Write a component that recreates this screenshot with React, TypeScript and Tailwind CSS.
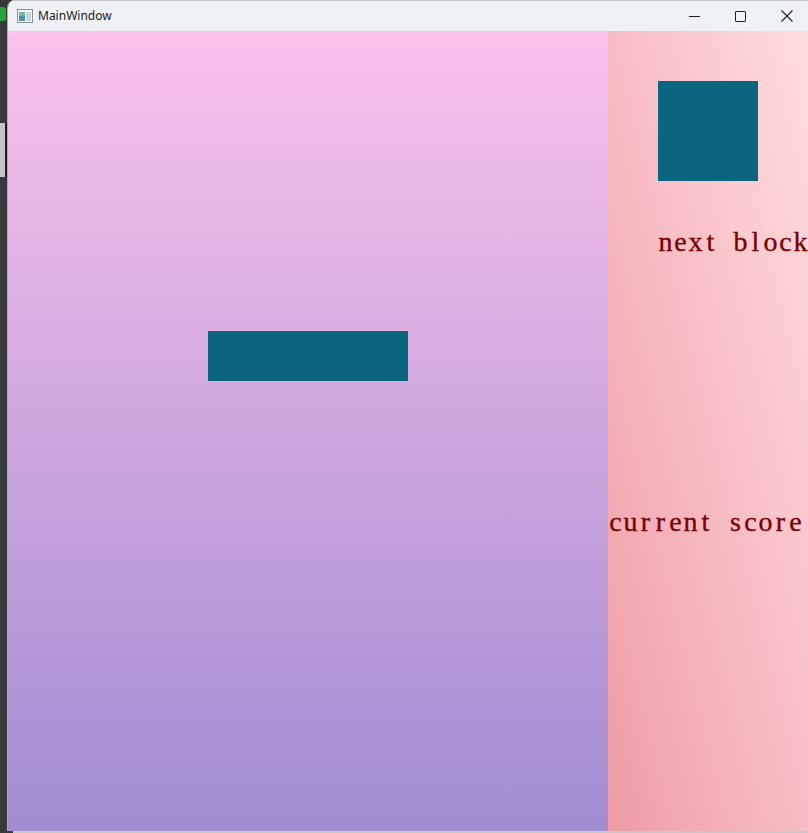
import React from 'react';

function MonoText({ text }: { text: string }) {
  // serif glyphs laid out on a fixed 15px grid, like the game's monospace label
  return (
    <div className="flex whitespace-nowrap text-[28px] leading-[28px] text-[#7a0000] font-['Liberation_Serif',serif] [-webkit-text-stroke:0.35px_#7a0000]">
      {text.split('').map((ch, i) => (
        <span key={i} className="inline-block w-[15px] shrink-0 text-center">
          {ch === ' ' ? '\u00a0' : ch}
        </span>
      ))}
    </div>
  );
}

function TitleBar() {
  return (
    <div className="h-[31px] shrink-0 bg-[#eef2f6] border-t border-[#c4c6c8] flex items-center font-['Noto_Sans',sans-serif]">
      <svg width="16" height="14" viewBox="0 0 16 14" className="ml-[9px]">
        <rect x="0.5" y="0.5" width="15" height="13" fill="#f4f6f8" stroke="#8a9096" />
        <rect x="2" y="3" width="6" height="9" fill="#4e8fae" />
        <rect x="2" y="3" width="6" height="4" fill="#7fb7a6" />
        <rect x="9" y="3" width="5" height="9" fill="#c9d3dc" />
      </svg>
      <span className="ml-[5px] text-[12px] text-[#1b1b1b]">MainWindow</span>
      <div className="ml-auto flex items-center h-full">
        <div className="w-[46px] h-full flex items-center justify-center">
          <div className="w-[11px] h-px bg-[#1f1f1f] ml-[2px]" />
        </div>
        <div className="w-[46px] h-full flex items-center justify-center">
          <div className="w-[11px] h-[11px] border border-[#1f1f1f] rounded-[1px] ml-[2px]" />
        </div>
        <div className="w-[46px] h-full flex items-center justify-center">
          <svg width="12" height="12" viewBox="0 0 12 12" className="ml-[4px]">
            <path d="M0.5 0.5 L11.5 11.5 M11.5 0.5 L0.5 11.5" stroke="#1f1f1f" strokeWidth="1.1" />
          </svg>
        </div>
      </div>
    </div>
  );
}

export default function App() {
  return (
    <div className="w-[808px] h-[833px] bg-[#38393b] flex flex-col overflow-hidden">
      <div className="flex flex-1 min-h-0">
        {/* desktop edge behind the window */}
        <div className="w-[7px] shrink-0 flex flex-col">
          <div className="mt-[7px] h-[14px] w-[6px] bg-[#2aa33a] rounded-r-[3px]" />
          <div className="mt-[102px] h-[54px] w-[7px] flex">
            <div className="w-[5px] bg-[#c3c5c6]" />
            <div className="w-[2px] bg-[#1c1c1c]" />
          </div>
        </div>

        <div className="flex-1 flex flex-col border-l border-[#a9abad] rounded-tl-[8px] overflow-hidden">
          <TitleBar />
          <div className="h-[800px] flex">
            {/* playfield */}
            <div className="relative w-[600px] shrink-0 bg-gradient-to-b from-[#fbc2eb] to-[#a18cd1]">
              <div className="absolute left-[200px] top-[300px] w-[200px] h-[50px] bg-[#0b657e]" />
            </div>

            {/* side panel */}
            <div className="w-[200px] shrink-0 overflow-hidden bg-gradient-to-tr from-[#ee9ca7] to-[#ffdde1] flex flex-col">
              <div className="mt-[50px] ml-[50px] w-[100px] h-[100px] bg-[#0b657e]" />
              <div className="mt-[47px] ml-[50px]">
                <MonoText text="next block" />
              </div>
              <div className="mt-[252px]">
                <MonoText text="current score" />
              </div>
            </div>
          </div>
        </div>
      </div>
      <div className="h-[2px] shrink-0 flex">
        <div className="w-[13px] bg-[#38393b]" />
        <div className="flex-1 bg-[#c8c8c8]" />
      </div>
    </div>
  );
}
